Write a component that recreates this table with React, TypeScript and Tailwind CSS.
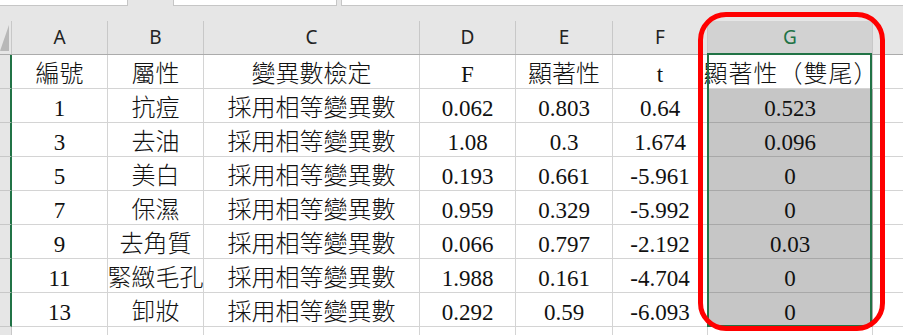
import React from "react";

const cols = ["A", "B", "C", "D", "E", "F", "G"];

const rows: string[][] = [
  ["編號", "屬性", "變異數檢定", "F", "顯著性", "t", "顯著性（雙尾）"],
  ["1", "抗痘", "採用相等變異數", "0.062", "0.803", "0.64", "0.523"],
  ["3", "去油", "採用相等變異數", "1.08", "0.3", "1.674", "0.096"],
  ["5", "美白", "採用相等變異數", "0.193", "0.661", "-5.961", "0"],
  ["7", "保濕", "採用相等變異數", "0.959", "0.329", "-5.992", "0"],
  ["9", "去角質", "採用相等變異數", "0.066", "0.797", "-2.192", "0.03"],
  ["11", "緊緻毛孔", "採用相等變異數", "1.988", "0.161", "-4.704", "0"],
  ["13", "卸妝", "採用相等變異數", "0.292", "0.59", "-6.093", "0"],
];

const gridCols = "grid grid-cols-[12px_96px_96px_216px_96px_97px_95px_165px_1fr]";
const isCjk = (s: string) => /[\u3000-\u9fff\uff00-\uffef]/.test(s);

function Cell({ text, ci, ri }: { text: string; ci: number; ri: number }) {
  const sel = ci === 6;
  const grey = sel && ri > 0;
  const size = isCjk(text)
    ? sel
      ? "text-[24px] font-light tracking-[1px] pl-[2px]"
      : "text-[24px] font-light"
    : "text-[23px]";
  return (
    <div
      className={`h-[34px] flex items-end justify-center pb-[2px] border-r border-b whitespace-nowrap leading-none text-[#111] ${size} ${
        grey ? "bg-[#c6c6c6] border-[#a8a8a8]" : "bg-white border-[#d4d4d4]"
      }`}
    >
      {text}
    </div>
  );
}

export default function App() {
  return (
    <div
      className="relative w-[903px] h-[335px] overflow-hidden bg-white"
      style={{ fontFamily: '"Liberation Serif", "Noto Sans CJK TC", serif' }}
    >
      {/* sheet tabs / formula area strip */}
      <div className="flex h-[6px] bg-[#e6e6e6]">
        <div className="w-[128px] bg-white border-r border-b border-[#c6c6c6]" />
        <div className="w-[45px]" />
        <div className="w-[164px] bg-white border-x border-b border-[#c6c6c6]" />
        <div className="w-[4px]" />
        <div className="flex-1 bg-white border-l border-b border-[#c6c6c6]" />
      </div>
      <div className="h-[15px] bg-[#e6e6e6]" />

      {/* column headers */}
      <div className={`${gridCols} h-[34px] bg-[#e6e6e6] border-b border-[#ababab]`} style={{ fontFamily: '"Noto Sans", sans-serif' }}>
        <div className="relative border-r border-[#c8c8c8]">
          <svg className="absolute left-0 top-[4px]" width="9" height="26" viewBox="0 0 9 26">
            <polygon points="9,0 9,26 0,26" fill="#b8b8b8" />
          </svg>
        </div>
        {cols.map((c) => (
          <div
            key={c}
            className={`flex items-center justify-center text-[19px] border-r border-[#c8c8c8] ${
              c === "G" ? "bg-[#d2d2d2] text-[#217346]" : "text-[#222]"
            }`}
          >
            {c}
          </div>
        ))}
        <div />
      </div>

      {/* data rows */}
      {rows.map((r, ri) => (
        <div key={ri} className={gridCols}>
          <div className="h-[34px] bg-[#e6e6e6] border-b border-[#c8c8c8] border-r-2 border-r-[#217346]" />
          {r.map((t, ci) => (
            <Cell key={ci} text={t} ci={ci} ri={ri} />
          ))}
          <div className="h-[34px] border-b border-[#d4d4d4]" />
        </div>
      ))}
      <div className={gridCols}>
        <div className="h-[34px] bg-[#e6e6e6] border-r border-[#c8c8c8]" />
        {cols.map((c) => (
          <div key={c} className="h-[34px] border-r border-[#d4d4d4]" />
        ))}
        <div />
      </div>

      {/* selection border */}
      <div className="absolute left-[707px] top-[53px] w-[165px] h-[274px] border-2 border-[#217346]" />
      {/* red annotation */}
      <div className="absolute left-[698px] top-[12px] w-[187px] h-[319px] border-[5px] border-[#ff0000] rounded-[28px]" />
    </div>
  );
}
